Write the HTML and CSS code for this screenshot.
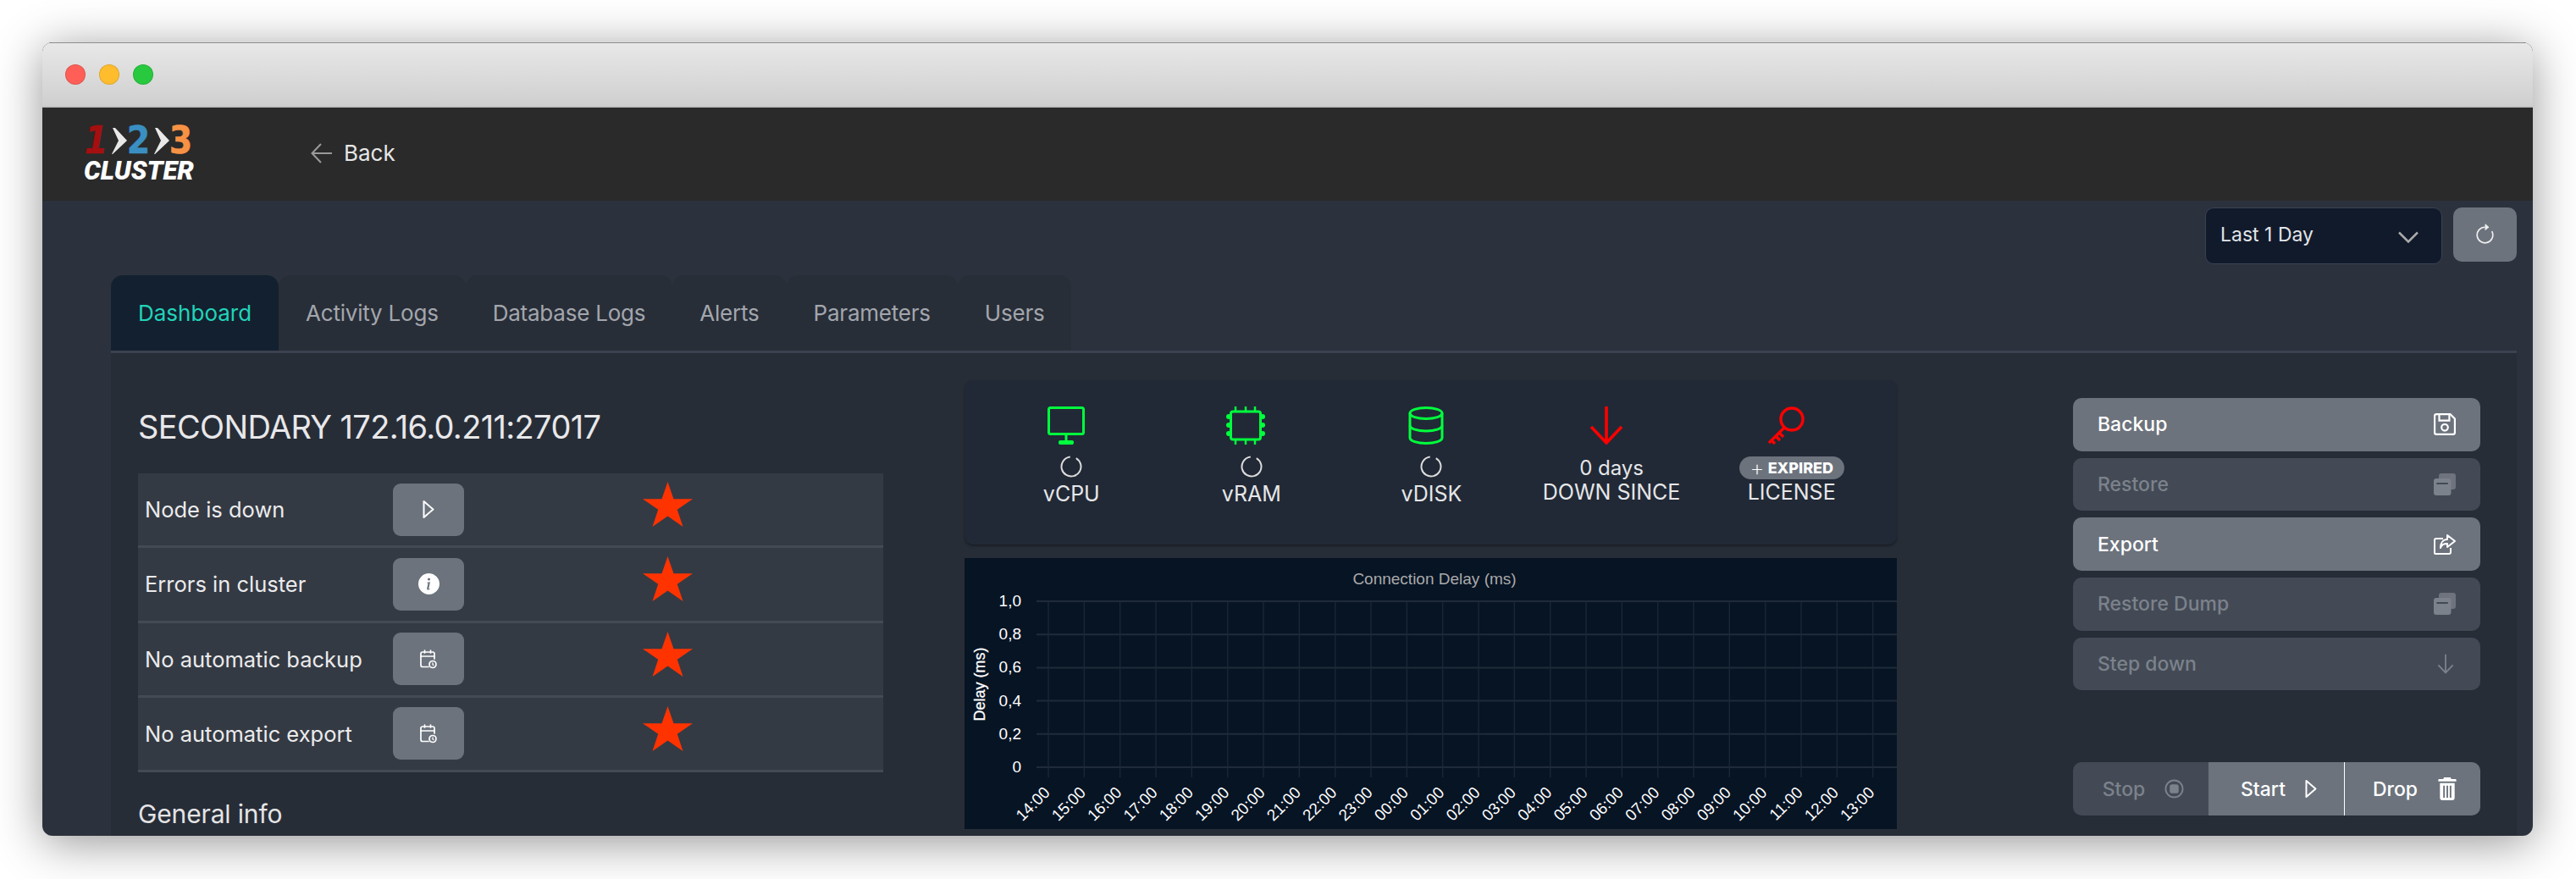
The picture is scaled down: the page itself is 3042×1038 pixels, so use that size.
FILE: index.html
```html
<!DOCTYPE html>
<html lang="en">
<head>
<meta charset="utf-8">
<title>123 Cluster</title>
<link rel="stylesheet" href="styles.css">
</head>
<body>
<svg class="defs" xmlns="http://www.w3.org/2000/svg">
  <symbol id="i-play" viewBox="0 0 14 23"><path d="M1.500 2 12.500 11.500 1.500 21Z" fill="none" stroke="currentColor" stroke-width="2" stroke-linejoin="round"/></symbol>
  <symbol id="i-cal" viewBox="0 0 20 23"><g fill="none" stroke="currentColor" stroke-width="1.700" stroke-linecap="round"><path d="M10 20.500H3a2 2 0 0 1-2-2V5a2 2 0 0 1 2-2h12a2 2 0 0 1 2 2v6"/><path d="M1 8h16M5.500 1v3M12.500 1v3"/><circle cx="15" cy="17.500" r="4"/><path d="M15 15.800v2l1 .7" stroke-width="1.300"/></g></symbol>
  <symbol id="i-stack" viewBox="0 0 26 26"><rect x="6" y="0" width="20" height="19" rx="3" fill="currentColor" opacity=".75"/><rect x="0" y="6" width="20.500" height="20" rx="3" fill="currentColor"/><rect x="3.300" y="11" width="13.500" height="2" fill="#434a55"/></symbol>
</svg>
<div class="window">
  <div class="titlebar">
    <span class="light light-red"></span>
    <span class="light light-yellow"></span>
    <span class="light light-green"></span>
  </div>
  <header class="topbar">
    <div class="logo">
      <div class="logo-digits">
        <span class="digit d1">1</span>
        <svg class="chev" viewBox="0 0 18 32"><path d="M1 1h3L18 16 1 32H0L8 16Z"/></svg>
        <span class="digit d2">2</span>
        <svg class="chev" viewBox="0 0 18 32"><path d="M1 1h3L18 16 1 32H0L8 16Z"/></svg>
        <span class="digit d3">3</span>
      </div>
      <div class="logo-word">CLUSTER</div>
    </div>
    <a class="back">
      <svg class="back-arrow" viewBox="0 0 26 24"><path d="M25 12H2M12 1 1.500 12 12 23" fill="none" stroke="currentColor" stroke-width="2"/></svg>
      <span>Back</span>
    </a>
  </header>
  <main class="main">
    <div class="toolbar">
      <div class="select">
        <span>Last 1 Day</span>
        <svg class="select-chev" viewBox="0 0 24 14"><path d="M1 1.500 12 12.500 23 1.500" fill="none" stroke="currentColor" stroke-width="2.500"/></svg>
      </div>
      <button class="refresh">
        <svg viewBox="0 0 16 16" class="refresh-icon"><path d="M8 3a5 5 0 1 0 4.546 2.914.5.5 0 0 1 .908-.417A6 6 0 1 1 8 2v1z" fill="currentColor"/><path d="M8 4.466V.534a.25.25 0 0 1 .41-.192l2.360 1.966c.12.1.12.284 0 .384L8.410 4.658A.25.25 0 0 1 8 4.466z" fill="currentColor"/></svg>
      </button>
    </div>
    <nav class="tabs">
      <a class="tab tab-active">Dashboard</a>
      <a class="tab">Activity Logs</a>
      <a class="tab">Database Logs</a>
      <a class="tab">Alerts</a>
      <a class="tab">Parameters</a>
      <a class="tab">Users</a>
    </nav>
    <section class="panel">
      <div class="col-left">
        <h2 class="node-title">SECONDARY 172.16.0.211:27017</h2>
        <div class="checks">
          <div class="check">
            <span class="check-label">Node is down</span>
            <button class="check-btn"><svg class="ic-play"><use href="#i-play"/></svg></button>
            <svg class="star" viewBox="0 0 59 53"><path d="M29.500 0 36.500 20.200H59L40.800 32.800 47.500 53 29.500 40.500 11.500 53 18.200 32.800 0 20.200H22.500Z"/></svg>
          </div>
          <div class="check">
            <span class="check-label">Errors in cluster</span>
            <button class="check-btn"><svg class="ic-info" viewBox="0 0 16 16"><path fill="currentColor" d="M8 16A8 8 0 1 0 8 0a8 8 0 0 0 0 16zm.93-9.412-1 4.705c-.07.34.029.533.304.533.194 0 .487-.07.686-.246l-.088.416c-.287.346-.92.598-1.465.598-.703 0-1.002-.422-.808-1.319l.738-3.468c.064-.293.006-.399-.287-.47l-.451-.081.082-.381 2.290-.287zM8 5.500a1 1 0 1 1 0-2 1 1 0 0 1 0 2z"/></svg></button>
            <svg class="star" viewBox="0 0 59 53"><path d="M29.500 0 36.500 20.200H59L40.800 32.800 47.500 53 29.500 40.500 11.500 53 18.200 32.800 0 20.200H22.500Z"/></svg>
          </div>
          <div class="check">
            <span class="check-label">No automatic backup</span>
            <button class="check-btn"><svg class="ic-cal"><use href="#i-cal"/></svg></button>
            <svg class="star" viewBox="0 0 59 53"><path d="M29.500 0 36.500 20.200H59L40.800 32.800 47.500 53 29.500 40.500 11.500 53 18.200 32.800 0 20.200H22.500Z"/></svg>
          </div>
          <div class="check">
            <span class="check-label">No automatic export</span>
            <button class="check-btn"><svg class="ic-cal"><use href="#i-cal"/></svg></button>
            <svg class="star" viewBox="0 0 59 53"><path d="M29.500 0 36.500 20.200H59L40.800 32.800 47.500 53 29.500 40.500 11.500 53 18.200 32.800 0 20.200H22.500Z"/></svg>
          </div>
        </div>
        <h3 class="section-title">General info</h3>
      </div>
      <div class="col-mid">
        <div class="status-card">
          <div class="stat">
            <svg class="stat-icon green" viewBox="0 0 44 45"><rect x="1.500" y="1.500" width="41" height="31" rx="2" fill="none" stroke="currentColor" stroke-width="3"/><path d="M22 33v9" stroke="currentColor" stroke-width="3"/><rect x="13" y="40" width="18" height="5" rx="2" fill="currentColor"/></svg>
            <svg class="spinner" viewBox="0 0 26 26"><circle cx="13" cy="13" r="11.500" pathLength="100" stroke-dasharray="90 10" transform="rotate(-60 13 13)"/></svg>
            <span class="stat-label">vCPU</span>
          </div>
          <div class="stat">
            <svg class="stat-icon green" viewBox="0 0 46 45"><rect x="5.500" y="6" width="35" height="33" rx="2.500" fill="none" stroke="currentColor" stroke-width="3"/><path d="M11 0v6M23 0v6M34 0v6M11 39v6M23 39v6M34 39v6" stroke="currentColor" stroke-width="2.500"/><g fill="currentColor"><circle cx="3" cy="12" r="3"/><circle cx="3" cy="22" r="3"/><circle cx="3" cy="32" r="3"/><circle cx="43" cy="12" r="3"/><circle cx="43" cy="22" r="3"/><circle cx="43" cy="32" r="3"/></g></svg>
            <svg class="spinner" viewBox="0 0 26 26"><circle cx="13" cy="13" r="11.500" pathLength="100" stroke-dasharray="90 10" transform="rotate(-60 13 13)"/></svg>
            <span class="stat-label">vRAM</span>
          </div>
          <div class="stat">
            <svg class="stat-icon green" viewBox="0 0 42 45"><g fill="none" stroke="currentColor" stroke-width="3"><ellipse cx="21" cy="8" rx="19" ry="6.500"/><path d="M2 8v29c0 3.600 8.500 6.500 19 6.500s19-2.900 19-6.500V8"/><path d="M2 22.500c0 3.600 8.500 6.500 19 6.500s19-2.900 19-6.500"/></g></svg>
            <svg class="spinner" viewBox="0 0 26 26"><circle cx="13" cy="13" r="11.500" pathLength="100" stroke-dasharray="90 10" transform="rotate(-60 13 13)"/></svg>
            <span class="stat-label">vDISK</span>
          </div>
          <div class="stat">
            <svg class="stat-icon red" viewBox="0 0 40 45"><path d="M20 0v42M2 24l18 19 18-19" fill="none" stroke="currentColor" stroke-width="3.600"/></svg>
            <span class="stat-value">0 days</span>
            <span class="stat-label stat-label-tight">DOWN SINCE</span>
          </div>
          <div class="stat">
            <svg class="stat-icon red" viewBox="0 0 44 45"><g fill="none" stroke="currentColor" stroke-width="3.400"><circle cx="29" cy="15" r="13"/><path d="M20 25 2 43M10 35l5 5M5 40l4 4M14 31l5 5"/></g></svg>
            <span class="badge"><span class="badge-plus">+</span> EXPIRED</span>
            <span class="stat-label stat-label-tight">LICENSE</span>
          </div>
        </div>
        <div class="chart">
          <svg class="chart-svg" viewBox="0 0 1101 320">
            <text class="c-title" x="555" y="31">Connection Delay (ms)</text>
            <g class="grid-h">
              <path d="M85 51H1101M85 90.200H1101M85 129.400H1101M85 168.600H1101M85 207.800H1101M85 247H1101"/>
            </g>
            <g class="grid-v">
              <path d="M99 51V259M141.300 51V259M183.700 51V259M226 51V259M268.300 51V259M310.700 51V259M353 51V259M395.300 51V259M437.700 51V259M480 51V259M522.300 51V259M564.700 51V259M607 51V259M649.300 51V259M691.700 51V259M734 51V259M776.300 51V259M818.700 51V259M861 51V259M903.300 51V259M945.700 51V259M988 51V259M1030.300 51V259M1072.700 51V259"/>
            </g>
            <g class="y-labels">
              <text x="67" y="57">1,0</text>
              <text x="67" y="96">0,8</text>
              <text x="67" y="135">0,6</text>
              <text x="67" y="175">0,4</text>
              <text x="67" y="214">0,2</text>
              <text x="67" y="253">0</text>
            </g>
            <text class="y-title" transform="translate(24 149) rotate(-90)">Delay (ms)</text>
            <g class="x-labels">
              <text transform="translate(102 278) rotate(-45)">14:00</text>
              <text transform="translate(144.300 278) rotate(-45)">15:00</text>
              <text transform="translate(186.700 278) rotate(-45)">16:00</text>
              <text transform="translate(229 278) rotate(-45)">17:00</text>
              <text transform="translate(271.300 278) rotate(-45)">18:00</text>
              <text transform="translate(313.700 278) rotate(-45)">19:00</text>
              <text transform="translate(356 278) rotate(-45)">20:00</text>
              <text transform="translate(398.300 278) rotate(-45)">21:00</text>
              <text transform="translate(440.700 278) rotate(-45)">22:00</text>
              <text transform="translate(483 278) rotate(-45)">23:00</text>
              <text transform="translate(525.300 278) rotate(-45)">00:00</text>
              <text transform="translate(567.700 278) rotate(-45)">01:00</text>
              <text transform="translate(610 278) rotate(-45)">02:00</text>
              <text transform="translate(652.300 278) rotate(-45)">03:00</text>
              <text transform="translate(694.700 278) rotate(-45)">04:00</text>
              <text transform="translate(737 278) rotate(-45)">05:00</text>
              <text transform="translate(779.300 278) rotate(-45)">06:00</text>
              <text transform="translate(821.700 278) rotate(-45)">07:00</text>
              <text transform="translate(864 278) rotate(-45)">08:00</text>
              <text transform="translate(906.300 278) rotate(-45)">09:00</text>
              <text transform="translate(948.700 278) rotate(-45)">10:00</text>
              <text transform="translate(991 278) rotate(-45)">11:00</text>
              <text transform="translate(1033.300 278) rotate(-45)">12:00</text>
              <text transform="translate(1075.700 278) rotate(-45)">13:00</text>
            </g>
          </svg>
        </div>
      </div>
      <div class="col-right">
        <div class="actions">
          <button class="action">
            <span>Backup</span>
            <svg class="a-icon" viewBox="0 0 24 24"><g fill="none" stroke="currentColor" stroke-width="2"><path d="M3 1h15l5 5v15a2 2 0 0 1-2 2H3a2 2 0 0 1-2-2V3a2 2 0 0 1 2-2Z"/><path d="M6 1v7h11V1"/><circle cx="12" cy="15.500" r="3.500"/></g></svg>
          </button>
          <button class="action action-off">
            <span>Restore</span>
            <svg class="a-icon"><use href="#i-stack"/></svg>
          </button>
          <button class="action">
            <span>Export</span>
            <svg class="a-icon" viewBox="0 0 26 24"><g fill="none" stroke="currentColor" stroke-width="2" stroke-linejoin="round"><path d="M11 5H3a2 2 0 0 0-2 2v15a1 1 0 0 0 1 1h16a2 2 0 0 0 2-2v-5"/><path d="M16 1l9 7-9 7v-4c-4 0-7 1-8 5 0-6 3-10 8-10Z"/></g></svg>
          </button>
          <button class="action action-off">
            <span>Restore Dump</span>
            <svg class="a-icon"><use href="#i-stack"/></svg>
          </button>
          <button class="action action-off">
            <span>Step down</span>
            <svg class="a-icon a-down" viewBox="0 0 22 26"><path d="M11 0v24M1.500 14 11 24l9.500-10" fill="none" stroke="currentColor" stroke-width="2"/></svg>
          </button>
        </div>
        <div class="btn-group">
          <button class="gbtn gbtn-off">
            <span>Stop</span>
            <svg class="g-icon g-stop" viewBox="0 0 24 24"><circle cx="12" cy="12" r="10.500" fill="none" stroke="currentColor" stroke-width="2"/><rect x="6.500" y="6.500" width="11" height="11" rx="3" fill="currentColor"/></svg>
          </button>
          <button class="gbtn gbtn-sep">
            <span>Start</span>
            <svg class="g-icon g-start"><use href="#i-play"/></svg>
          </button>
          <button class="gbtn gbtn-sep">
            <span>Drop</span>
            <svg class="g-icon g-drop" viewBox="0 0 22 28"><path fill="currentColor" d="M7 0h8l1 2h5a1 1 0 0 1 1 1v2H0V3a1 1 0 0 1 1-1h5ZM2 7h18v18a3 3 0 0 1-3 3H5a3 3 0 0 1-3-3Z"/><path d="M7 10v15M11 10v15M15 10v15" stroke="#6c737d" stroke-width="2"/></svg>
          </button>
        </div>
      </div>
    </section>
  </main>
</div>
</body>
</html>
```
FILE: styles.css
```css
* { box-sizing: border-box; }
html, body { height: 100%; }
body {
  margin: 0;
  padding: 50px 0 0 50px;
  background: #fff;
  overflow: hidden;
  font-family: Inter, "Noto Sans", sans-serif;
  color: #e6e6e8;
}
.defs { display: none; }
button { font: inherit; border: 0; color: inherit; padding: 0; }

.window {
  width: 2941px;
  height: 937px;
  display: flex;
  flex-direction: column;
  border-radius: 12px;
  overflow: hidden;
  box-shadow: 0 8px 55px rgba(0, 0, 0, .42);
  background: #2c323d;
}
.titlebar {
  height: 77px;
  flex: none;
  display: flex;
  align-items: center;
  gap: 16px;
  padding: 0 0 0 27px;
  background: linear-gradient(#e8e8e8, #cfcfcf);
  border-top: 1px solid #8e8e8e;
  border-bottom: 2px solid #c2c2c2;
}
.light { width: 24px; height: 24px; border-radius: 50%; border: 1px solid rgba(0,0,0,.12); }
.light-red { background: #ff5f57; }
.light-yellow { background: #ffbd2e; }
.light-green { background: #28c93f; }

.topbar {
  height: 110px;
  flex: none;
  display: flex;
  align-items: center;
  padding-left: 49px;
  background: #2a2a2a;
}
.logo { width: 129px; display: flex; flex-direction: column; gap: 9px; padding-bottom: 2px; }
.logo-digits {
  display: flex;
  align-items: center;
  padding-left: 2px;
  height: 33px;
  font-family: "DejaVu Sans Condensed", "DejaVu Sans", sans-serif;
  font-weight: 700;
  font-size: 44px;
  line-height: 33px;
  -webkit-text-stroke: .5px currentColor;
}
.digit { width: 25px; display: flex; justify-content: center; flex: none; }
.d1 { color: #a50f10; font-style: italic; }
.d2 { color: #3a8fc2; }
.d3 { color: #f79245; }
.chev { width: 18px; height: 32px; margin: 0 1px 0 6px; fill: #e8e8e8; flex: none; }
.logo-word { font: italic 900 31px/22px Roboto, sans-serif; color: #fff; white-space: nowrap; }
.back { margin: 0 0 3px 139px; display: flex; align-items: center; gap: 13px; font-size: 26px; color: #e6e6e6; }
.back-arrow { width: 26px; height: 24px; color: #9a9a9a; }

.main { flex: 1; min-height: 0; display: flex; flex-direction: column; padding: 0 19px 0 81px; }
.toolbar { height: 88px; flex: none; display: flex; justify-content: flex-end; align-items: flex-start; gap: 13px; padding-top: 8px; }
.select {
  width: 280px;
  height: 67px;
  display: flex;
  align-items: center;
  justify-content: space-between;
  padding: 0 27px 3px 17px;
  background: #111a2b;
  border: 1px solid #3a4252;
  border-radius: 10px;
  font-size: 23px;
  color: #e2e4e8;
}
.select-chev { width: 24px; height: 14px; color: #aaa; margin-top: 5px; }
.refresh { width: 75px; height: 64px; background: #6c737d; border-radius: 10px; display: flex; align-items: center; justify-content: center; }
.refresh-icon { width: 27px; height: 27px; color: #eee; }

.tabs { flex: none; height: 92px; display: flex; border-bottom: 3px solid #3c4250; }
.tab {
  padding: 0 32px;
  height: 89px;
  display: flex;
  align-items: center;
  font-size: 26px;
  letter-spacing: -.22px;
  color: #a3a6ad;
  background: #282e38;
  border-radius: 14px 14px 0 0;
}
.tab-active { background: #13202f; color: #22d3b9; letter-spacing: 0; }

.panel { flex: 1; min-height: 0; display: flex; align-items: flex-start; padding: 32px 0 0 32px; background: #272d37; overflow: hidden; }
.col-left { width: 880px; flex: none; }
.node-title { margin: 0; height: 110px; font-size: 38px; font-weight: 400; letter-spacing: -.65px; line-height: 110px; color: #e8e8ea; white-space: nowrap; }
.check {
  height: 88.250px;
  display: flex;
  align-items: center;
  padding: 0 0 0 8px;
  background: #343a43;
  border-bottom: 3px solid #444a54;
}
.check-label { width: 293px; font-size: 25.500px; color: #ebebed; white-space: nowrap; }
.check-btn { width: 84px; height: 62px; border-radius: 9px; background: #6c737d; display: flex; align-items: center; justify-content: center; color: #fff; }
.ic-play { width: 14px; height: 23px; }
.ic-info { width: 25px; height: 25px; }
.ic-cal { width: 20px; height: 23px; }
.star { width: 59px; height: 53px; margin: 0 0 12px 211px; fill: #ff3300; }
.section-title { margin: 30px 0 0; font-size: 30px; font-weight: 400; letter-spacing: -.15px; line-height: 38px; color: #e4e4e6; }

.col-mid { width: 1101px; flex: none; margin-left: 96px; display: flex; flex-direction: column; gap: 16px; }
.status-card {
  height: 194px;
  display: flex;
  padding-top: 31px;
  padding-left: 20px;
  background: #212936;
  border-radius: 10px;
  box-shadow: 0 2px 3px rgba(0, 0, 0, .35);
}
.stat { width: 212.600px; display: flex; flex-direction: column; align-items: center; }
.stat-icon { height: 45px; margin-right: 13px; margin-bottom: 13px; }
.green { color: #00ff3c; }
.red { color: #ff0000; }
.spinner { width: 26px; height: 26px; fill: none; stroke: #dcdcdc; stroke-width: 2; }
.stat-value { height: 27px; margin-top: 1px; font-size: 24px; line-height: 27px; }
.stat-label { margin-top: 4px; font-size: 25px; line-height: 30px; color: #e6e6e8; }
.stat-label-tight { margin-top: 0; }
.badge {
  width: 124px;
  height: 27px;
  margin-top: 1px;
  border-radius: 14px;
  background: #6c737d;
  display: flex;
  align-items: center;
  justify-content: center;
  gap: 4px;
  font-size: 18px;
  font-weight: 800;
  color: #fff;
  white-space: nowrap;
}
.badge-plus { font-weight: 200; font-size: 27px; line-height: 22px; }
.chart { height: 320px; background: #071424; }
.chart-svg { display: block; width: 1101px; height: 320px; font-family: "Liberation Sans", Arial, sans-serif; }
.c-title { font-size: 19px; fill: #aaaaaa; text-anchor: middle; }
.grid-h path { stroke: #1f2b39; stroke-width: 2; fill: none; }
.grid-v path { stroke: #1c2836; stroke-width: 1.300; fill: none; }
.y-labels text { font-size: 19px; fill: #fff; text-anchor: end; }
.y-title { font-size: 18px; fill: #fff; stroke: #fff; stroke-width: .3px; text-anchor: middle; }
.x-labels text { font-size: 19px; fill: #fff; text-anchor: end; }

.col-right { width: 481px; flex: none; margin-left: 208px; margin-top: 21px; }
.actions { display: flex; flex-direction: column; gap: 8px; }
.action {
  height: 62.700px;
  display: flex;
  align-items: center;
  justify-content: space-between;
  padding: 0 29px;
  border-radius: 10px;
  background: #6c737d;
  color: #fff;
  font-size: 23px;
  font-weight: 500;
}
.action-off { background: #434a55; color: #7c828c; }
.a-icon { width: 26px; height: 26px; }
.a-down { width: 20px; height: 25px; margin-right: 2px; }
.btn-group { margin-top: 85px; height: 63px; display: flex; border-radius: 10px; overflow: hidden; }
.gbtn {
  flex: 1;
  display: flex;
  align-items: center;
  justify-content: center;
  gap: 23px;
  padding-left: 6px;
  background: #6c737d;
  color: #fff;
  font-size: 23px;
  font-weight: 500;
}
.gbtn-off { background: #434a55; color: #7c828c; }
.gbtn-sep + .gbtn-sep { border-left: 1px solid #fff; }
.g-stop { width: 23px; height: 23px; }
.g-start { width: 14px; height: 23px; }
.g-drop { width: 24px; height: 27px; }
```
